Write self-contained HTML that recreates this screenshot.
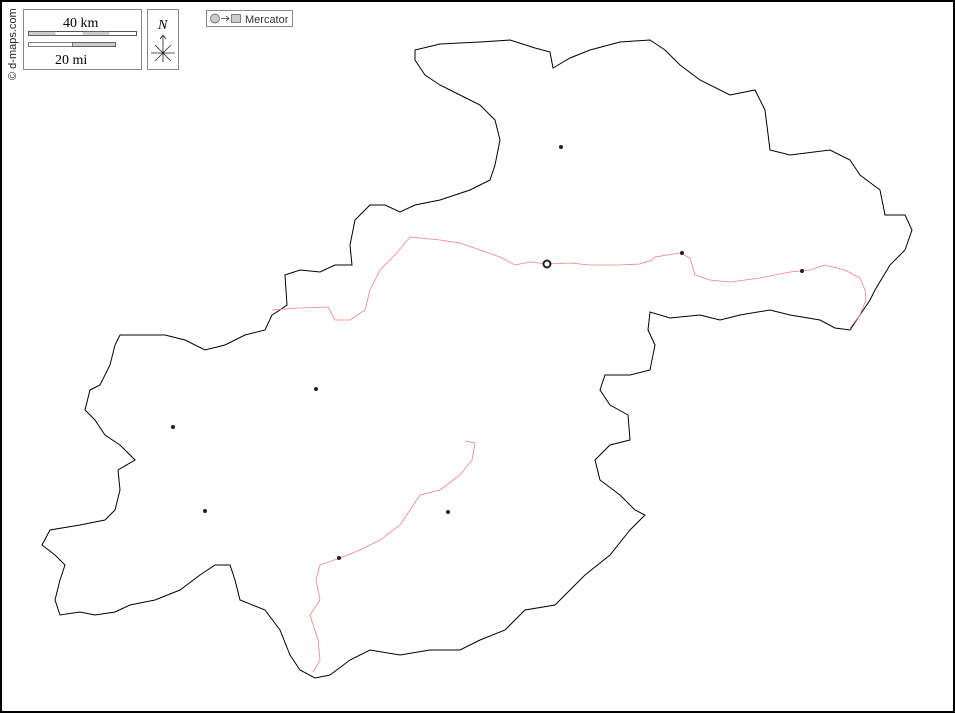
<!DOCTYPE html>
<html><head><meta charset="utf-8"><style>
html,body{margin:0;padding:0;background:#fff}
#f{position:absolute;left:0;top:0;width:951px;height:709px;border:2px solid #000;overflow:hidden}
.t{font-family:"Liberation Serif",serif;font-size:14px;position:absolute}
</style></head><body>
<div id="f">
<svg width="951" height="709" viewBox="2 2 951 709" style="position:absolute;left:0;top:0">
<polygon fill="none" stroke="#000" stroke-width="1" points="415,50 440,44 480,42 510,40 535,48 550,52 553,68 570,58 590,50 620,42 650,40 665,50 680,65 700,80 730,95 755,90 765,110 770,150 790,155 830,150 850,160 860,175 880,190 885,215 905,215 912,230 905,250 890,265 875,290 870,300 860,315 850,330 835,328 820,320 790,315 770,310 740,315 720,320 700,315 670,318 650,312 648,330 655,345 650,370 630,375 605,375 600,390 610,405 628,415 630,440 610,445 595,460 600,480 620,495 635,510 645,515 630,530 610,555 585,575 570,590 555,605 525,610 505,630 480,640 460,650 430,650 400,655 370,650 350,660 330,675 315,678 300,670 290,655 280,630 265,610 240,600 235,580 230,565 215,565 200,575 180,590 155,600 130,605 115,612 95,615 80,612 60,615 55,600 60,580 65,565 55,555 42,545 50,530 80,525 105,520 115,510 120,490 118,470 135,460 120,445 105,435 95,420 85,410 90,390 100,385 110,365 115,345 120,335 140,335 165,335 185,340 205,350 225,345 245,335 265,330 272,315 280,310 287,305 285,275 300,270 320,272 335,265 352,265 350,245 355,220 370,205 385,205 400,212 415,205 440,200 470,190 490,180 495,165 500,140 495,120 480,105 460,95 440,85 425,75 415,60"/>
<polyline fill="none" stroke="#f08080" stroke-width="0.8" points="272,310 300,308 328,307 335,320 350,320 365,310 370,290 380,270 395,255 410,237 440,240 460,243 480,250 500,257 515,265 530,262 547,264 570,263 590,265 620,265 640,264 652,260 655,257 680,253 690,258 695,275 710,280 730,282 760,278 790,272 810,270 825,265 845,270 860,278 865,290 866,300 860,315 850,328"/>
<polyline fill="none" stroke="#f08080" stroke-width="0.8" points="465,441 475,443 472,460 460,475 440,490 420,495 410,510 400,525 380,540 360,550 340,558 320,565 316,580 320,600 310,615 318,640 320,660 313,672"/>
<g fill="#222"><circle cx="561" cy="147" r="2"/><circle cx="682" cy="253" r="2"/><circle cx="802" cy="271" r="2"/><circle cx="316" cy="389" r="2"/><circle cx="173" cy="427" r="2"/><circle cx="205" cy="511" r="2"/><circle cx="448" cy="512" r="2"/><circle cx="339" cy="558" r="2"/></g>
<circle cx="547" cy="264" r="3.5" fill="#fff" stroke="#222" stroke-width="2"/>
<!-- scale box -->
<rect x="23.5" y="9.5" width="118" height="60" fill="#fff" stroke="#888"/>
<rect x="28.5" y="31.5" width="108" height="4" fill="#fff" stroke="#444" stroke-width=".7"/>
<rect x="28.5" y="31.5" width="27" height="4" fill="#ccc"/><rect x="82.5" y="31.5" width="27" height="4" fill="#ccc"/>
<rect x="28.5" y="31.5" width="108" height="4" fill="none" stroke="#444" stroke-width=".7"/>
<rect x="28.5" y="42.5" width="87" height="4" fill="#fff" stroke="#444" stroke-width=".7"/>
<rect x="72.5" y="42.5" width="43" height="4" fill="#ccc" stroke="#444" stroke-width=".7"/>
<rect x="147.5" y="9.5" width="31" height="60" fill="#fff" stroke="#888"/>
<path d="M163 36V62M151 53H175M155 45L171 61M171 45L155 61M160 39L163 35L166 39" stroke="#222" stroke-width=".8" fill="none"/>
<rect x="206.5" y="10.5" width="86" height="16" fill="#fff" stroke="#888"/>
<circle cx="215" cy="18.5" r="4.5" fill="#ccc" stroke="#555" stroke-width=".7"/>
<path d="M221 18.5h8M226 16l3 2.5-3 2.5" stroke="#333" stroke-width=".8" fill="none"/>
<rect x="231.5" y="14.5" width="9" height="8" fill="#ccc" stroke="#555" stroke-width=".7"/>
<text x="245" y="23" font-family="Liberation Sans,sans-serif" font-size="11" fill="#333">Mercator</text>
<text x="63" y="27" font-family="Liberation Serif,serif" font-size="14">40 km</text>
<text x="55" y="64" font-family="Liberation Serif,serif" font-size="14">20 mi</text>
<text x="158" y="29" font-family="Liberation Serif,serif" font-size="14" font-style="italic">N</text>
<text transform="translate(16,80) rotate(-90)" font-family="Liberation Sans,sans-serif" font-size="11" fill="#222">© d-maps.com</text>
</svg>
</div>
</body></html>
